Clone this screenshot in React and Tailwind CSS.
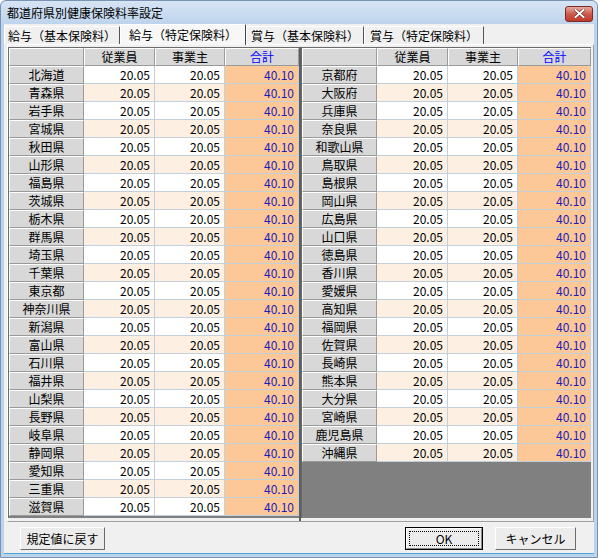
import React from 'react'

const LEFT = [
  '北海道', '青森県', '岩手県', '宮城県', '秋田県', '山形県', '福島県', '茨城県', '栃木県',
  '群馬県', '埼玉県', '千葉県', '東京都', '神奈川県', '新潟県', '富山県', '石川県', '福井県',
  '山梨県', '長野県', '岐阜県', '静岡県', '愛知県', '三重県', '滋賀県',
]
const RIGHT = [
  '京都府', '大阪府', '兵庫県', '奈良県', '和歌山県', '鳥取県', '島根県', '岡山県', '広島県',
  '山口県', '徳島県', '香川県', '愛媛県', '高知県', '福岡県', '佐賀県', '長崎県', '熊本県',
  '大分県', '宮崎県', '鹿児島県', '沖縄県',
]

const TABS = ['給与（基本保険料）', '給与（特定保険料）', '賞与（基本保険料）', '賞与（特定保険料）']

const font = { fontFamily: '"Noto Sans CJK JP", "Noto Sans", sans-serif' }

function Fixed({ w, children, blue }) {
  return (
    <div
      className={`h-[18px] shrink-0 bg-[#d8d8d8] border-t border-l border-t-white border-l-white border-r border-b border-r-[#9a9a9a] border-b-[#9a9a9a] text-center text-[12px] leading-[15px] ${
        blue ? 'text-[#0000ff]' : 'text-black'
      }`}
      style={{ width: w }}
    >
      {children}
    </div>
  )
}

function Cell({ w, bg, children, blue }) {
  return (
    <div
      className={`h-[18px] shrink-0 border-r border-b border-[#c3cfdb] text-right pr-[4px] text-[12px] leading-[17px] ${bg} ${
        blue ? 'text-[#1c1cb8]' : 'text-black'
      }`}
      style={{ width: w }}
    >
      {children}
    </div>
  )
}

function Grid({ rows, widths }) {
  const [rh, c1, c2, c3] = widths
  return (
    <div className="h-[471px] bg-[#808080] border-l border-t border-[#6b6b6b] flex flex-col">
      <div className="flex">
        <Fixed w={rh} />
        <Fixed w={c1}>従業員</Fixed>
        <Fixed w={c2}>事業主</Fixed>
        <Fixed w={c3} blue>合計</Fixed>
      </div>
      {rows.map((name, i) => {
        const bg = i % 2 === 1 ? 'bg-[#fdefe2]' : 'bg-white'
        return (
          <div key={name} className="flex">
            <Fixed w={rh}>{name}</Fixed>
            <Cell w={c1} bg={bg}>20.05</Cell>
            <Cell w={c2} bg={bg}>20.05</Cell>
            <Cell w={c3} bg="bg-[#fdc897]" blue>40.10</Cell>
          </div>
        )
      })}
    </div>
  )
}

function Button({ w, children, focused }) {
  return (
    <div
      className={`h-[23px] flex items-center justify-center text-[12px] bg-[#ececec] ${
        focused
          ? 'border border-black'
          : 'border border-t-white border-l-white border-r-[#6b6b6b] border-b-[#6b6b6b]'
      }`}
      style={{ width: w }}
    >
      {focused ? (
        <div className="w-full h-full border border-t-white border-l-white border-r-[#8a8a8a] border-b-[#8a8a8a] p-[2px]">
          <div className="w-full h-full border border-dotted border-black flex items-center justify-center leading-none">
            {children}
          </div>
        </div>
      ) : (
        children
      )}
    </div>
  )
}

export default function App() {
  return (
    <div
      className="w-[598px] h-[558px] bg-[#bcd3ec] border border-[#7a93b3] rounded-t-[6px] flex flex-col"
      style={font}
    >
      {/* Title bar */}
      <div className="h-[23px] shrink-0 flex items-center justify-between pl-[6px] pr-[4px] bg-gradient-to-b from-[#d6e4f4] to-[#bed4ec] rounded-t-[6px]">
        <span className="text-[12px] text-black leading-none mt-[1px]">都道府県別健康保険料率設定</span>
        <div className="w-[28px] h-[16px] mt-[2px] rounded-[3px] border border-[#7a2b24] bg-gradient-to-b from-[#e6a99f] via-[#cf5a4c] to-[#c0392b] flex items-center justify-center">
          <svg width="11" height="9" viewBox="0 0 11 9">
            <path d="M1.5 1 L9.5 8 M9.5 1 L1.5 8" stroke="#5a1a14" strokeWidth="3" strokeLinecap="square" />
            <path d="M1.5 1 L9.5 8 M9.5 1 L1.5 8" stroke="white" strokeWidth="2" strokeLinecap="square" />
          </svg>
        </div>
      </div>

      {/* Client area */}
      <div className="flex-1 mx-[3px] mb-[3px] bg-[#f0f0f0] flex flex-col border-b border-[#4aa3d8]">
        {/* Tabs */}
        <div className="h-[20px] flex items-end">
          {TABS.map((t, i) => {
            const widths = [116, 126, 118, 120]
            const sel = i === 1
            return (
              <div
                key={t}
                className={`flex items-center justify-center text-[12px] text-black border-l border-t border-r ${
                  sel
                    ? 'h-[21px] bg-[#f7f7f7] border-l-white border-t-white border-r-[#444] relative z-10 mb-[-1px]'
                    : 'h-[18px] border-l-white border-t-white border-r-[#555]'
                }`}
                style={{ width: widths[i] }}
              >
                {t}
              </div>
            )
          })}
        </div>

        {/* Panel */}
        <div className="ml-[3px] w-[587px] h-[478px] border border-t-white border-l-white border-r-[#a0a0a0] border-b-[#a0a0a0] pt-[2px] flex">
          <div className="w-[293px] border-r-2 border-[#5e5e5e]">
            <Grid rows={LEFT} widths={[75, 71, 70, 74]} />
          </div>
          <div className="w-[290px]">
            <Grid rows={RIGHT} widths={[75, 71, 70, 73]} />
          </div>
        </div>

        {/* Buttons */}
        <div className="flex items-center mt-[5px] pl-[16px]">
          <Button w={85}>規定値に戻す</Button>
          <div className="flex-1" />
          <Button w={78} focused>OK</Button>
          <div className="w-[12px]" />
          <Button w={81}>キャンセル</Button>
          <div className="w-[18px]" />
        </div>
      </div>
    </div>
  )
}
